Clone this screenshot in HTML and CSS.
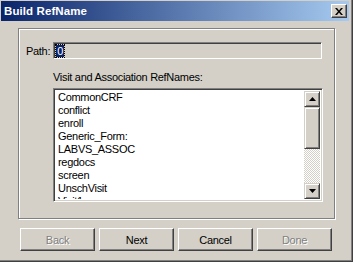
FILE: index.html
```html
<!DOCTYPE html>
<html lang="en">
<head>
  <meta charset="UTF-8" />
  <title>Build RefName</title>
  <link rel="stylesheet" href="styles.css">
</head>
<body>
  <div class="window">
    <!-- Title bar -->
    <div class="titlebar">
      <span class="title">Build RefName</span>
      <span class="close">
        <svg width="8" height="7" viewBox="0 0 8 7">
          <path d="M0 0h2l2 2.5L6 0h2L5 3.5 8 7H6L4 4.5 2 7H0l3-3.5z" fill="#000"/>
        </svg>
      </span>
    </div>

    <!-- Group box -->
    <div class="group">
      <div class="path-row">
        <label class="path-label">Path:</label>
        <div class="path-input"><span class="sel">0</span></div>
      </div>
      <div class="list-label">Visit and Association RefNames:</div>
      <div class="listbox">
        <ul class="items">
          <li>CommonCRF</li>
          <li>conflict</li>
          <li>enroll</li>
          <li>Generic_Form:</li>
          <li>LABVS_ASSOC</li>
          <li>regdocs</li>
          <li>screen</li>
          <li>UnschVisit</li>
          <li>Visit1</li>
        </ul>
        <div class="scrollbar">
          <div class="sb-btn">
            <svg width="7" height="4" viewBox="0 0 7 4"><path d="M3.5 0L7 4H0z" fill="#000"/></svg>
          </div>
          <div class="sb-thumb"></div>
          <div class="sb-track"></div>
          <div class="sb-btn">
            <svg width="7" height="4" viewBox="0 0 7 4"><path d="M0 0h7L3.5 4z" fill="#000"/></svg>
          </div>
        </div>
      </div>
    </div>

    <!-- Buttons -->
    <div class="buttons">
      <button class="btn" disabled>Back</button>
      <button class="btn">Next</button>
      <button class="btn">Cancel</button>
      <button class="btn" disabled>Done</button>
    </div>
  </div>
</body>
</html>
```

FILE: styles.css
```css
body {
  margin: 0;
  background: #d4d0c8;
  font-family: "Liberation Sans", Arial, sans-serif;
  font-size: 11px;
  letter-spacing: -0.3px;
  color: #000;
}
.window {
  width: 353px;
  height: 262px;
  box-sizing: border-box;
  padding: 1px 2px 0 1px;
  border-right: 1px solid #404040;
  border-bottom: 1px solid #404040;
  box-shadow: inset -1px -1px #808080;
}
.titlebar {
  height: 20px;
  margin-right: 1px;
  display: flex;
  align-items: center;
  justify-content: space-between;
  padding: 0 2px 0 3px;
  background: linear-gradient(to right, #0a246a, #a6caf0);
}
.title {
  color: #fff;
  font-weight: bold;
  font-size: 11.5px;
  letter-spacing: 0.1px;
}
.close {
  width: 16px;
  height: 14px;
  box-sizing: border-box;
  display: flex;
  align-items: center;
  justify-content: center;
  background: #d4d0c8;
  border-top: 1px solid #fff;
  border-left: 1px solid #fff;
  border-right: 1px solid #404040;
  border-bottom: 1px solid #404040;
  box-shadow: inset -1px -1px #808080;
}
.group {
  margin: 7px 15px 0 17px;
  height: 191px;
  box-sizing: border-box;
  border: 1px solid #808080;
  box-shadow: inset 1px 1px #fff, 1px 1px #fff;
  padding: 13px 12px 0 7px;
}
.path-row {
  display: flex;
  align-items: center;
  gap: 3px;
}
.path-input {
  width: 269px;
  height: 17px;
  box-sizing: border-box;
  border-top: 1px solid #808080;
  border-left: 1px solid #808080;
  border-right: 1px solid #fff;
  border-bottom: 1px solid #fff;
  box-shadow: inset 1px 1px #404040, inset -1px -1px #d4d0c8;
  padding: 2px 0 0 2px;
  line-height: 12px;
}
.sel {
  background: #0a246a;
  color: #fff;
  outline: 1px dotted #000;
  padding: 0 1px;
}
.list-label {
  margin: 12px 0 4px 27px;
  line-height: 13px;
}
.listbox {
  margin-left: 27px;
  width: 270px;
  height: 114px;
  box-sizing: border-box;
  display: flex;
  background: #fff;
  border-top: 1px solid #808080;
  border-left: 1px solid #808080;
  border-right: 1px solid #fff;
  border-bottom: 1px solid #fff;
  box-shadow: inset 1px 1px #404040, inset -1px -1px #d4d0c8;
  padding: 2px;
}
.items {
  flex: 1;
  margin: 0;
  padding: 0 0 0 2px;
  list-style: none;
  overflow: hidden;
  line-height: 13px;
}
.scrollbar {
  width: 16px;
  display: flex;
  flex-direction: column;
}
.sb-btn, .sb-thumb {
  height: 16px;
  box-sizing: border-box;
  background: #d4d0c8;
  border-top: 1px solid #d4d0c8;
  border-left: 1px solid #d4d0c8;
  border-right: 1px solid #404040;
  border-bottom: 1px solid #404040;
  box-shadow: inset 1px 1px #fff, inset -1px -1px #808080;
  display: flex;
  align-items: center;
  justify-content: center;
}
.sb-thumb {
  height: 42px;
}
.sb-track {
  flex: 1;
  background-color: #fff;
  background-image: repeating-conic-gradient(#d4d0c8 0 25%, #fff 0 50%);
  background-size: 2px 2px;
}
.buttons {
  display: flex;
  gap: 4px;
  margin: 9px 0 0 19px;
}
.btn {
  width: 75px;
  height: 23px;
  box-sizing: border-box;
  font-family: "Liberation Sans", Arial, sans-serif;
  font-size: 11px;
  font-weight: normal;
  letter-spacing: -0.3px;
  color: #000;
  background: #d4d0c8;
  border-top: 1px solid #fff;
  border-left: 1px solid #fff;
  border-right: 1px solid #404040;
  border-bottom: 1px solid #404040;
  box-shadow: inset -1px -1px #808080;
  padding: 0;
}
.btn:disabled {
  color: #808080;
  text-shadow: 1px 1px #fff;
}
```
